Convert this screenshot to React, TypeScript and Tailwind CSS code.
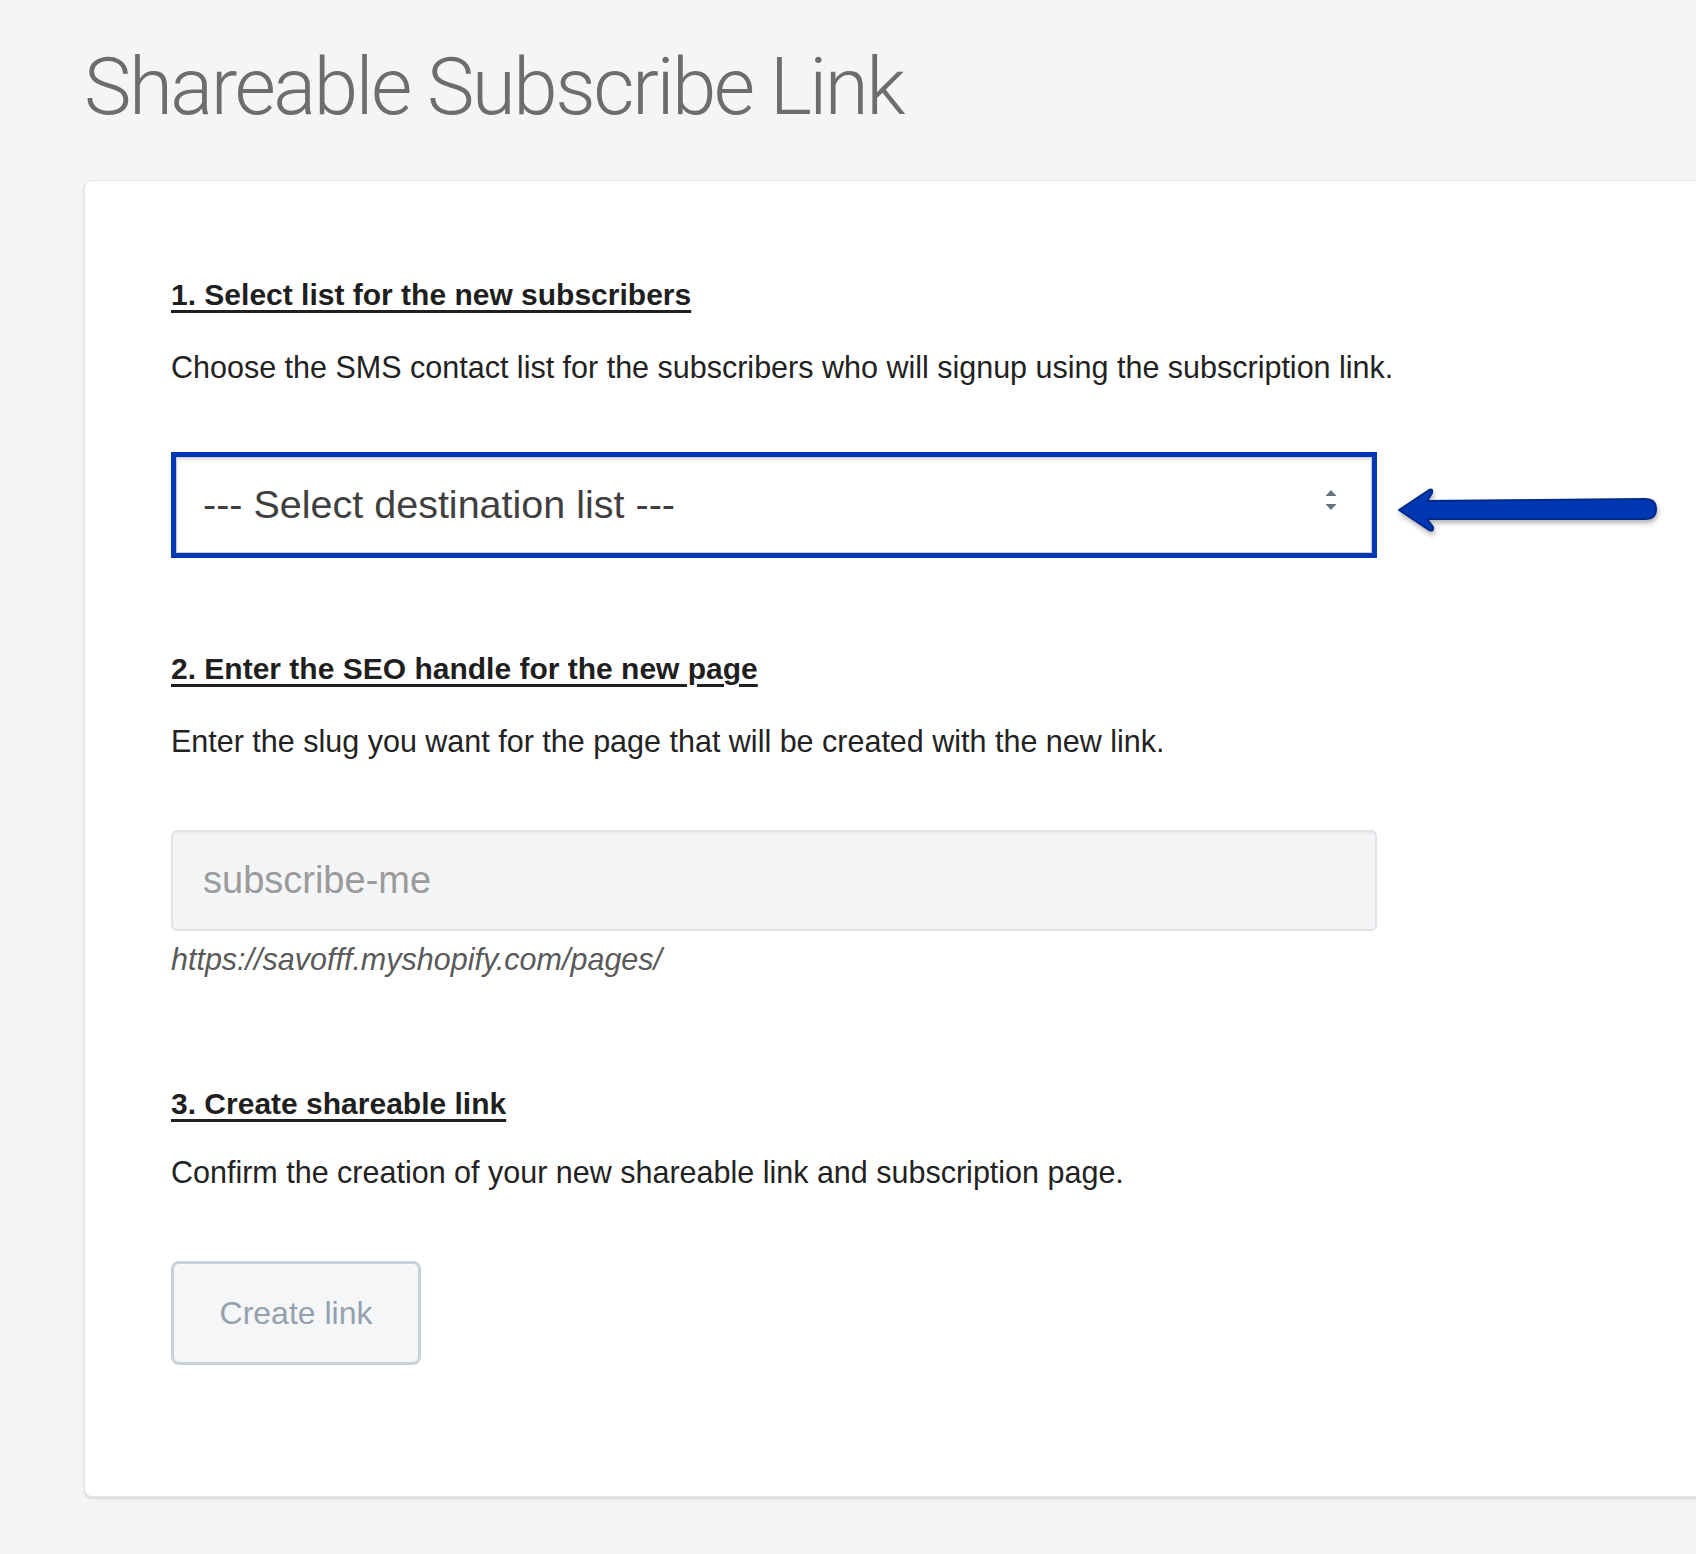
const sans = "font-['Liberation_Sans',Arial,sans-serif]";

const SectionHeading = ({children}: {children: string}) => (
    <h2 className="text-[30px] leading-[36px] font-bold text-[#1f1f1f] underline decoration-[3px] underline-offset-[5px]">
        {children}
    </h2>
);

const Arrow = () => (
    <svg width="270" height="60" viewBox="0 0 270 60" className="shrink-0 mt-[10px] ml-[-4px]">
        <defs>
            <filter id="arrowShadow" x="-10%" y="-30%" width="120%" height="180%">
                <feDropShadow dx="1" dy="3" stdDeviation="2.5" floodColor="#000" floodOpacity="0.3" />
            </filter>
        </defs>
        <path
            d="M4 30 L34 10 Q38 8 37 13 L32 21 L250 19 Q261 19 261 29 Q261 39 250 39 L32 39 L38 47 Q39 52 34 50 Z"
            fill="#0437b3"
            stroke="#022a8a"
            strokeWidth="2"
            strokeLinejoin="round"
            filter="url(#arrowShadow)"
        />
    </svg>
);

export default function App() {
    return (
        <div className={`min-h-screen bg-[#f4f5f7] overflow-hidden ${sans}`}>
            {/* Title */}
            <div className="pl-[84px] pt-[47px]">
                <h1 className="font-['Roboto',sans-serif] font-light text-[80px] leading-[80px] text-[#6d6d6d] tracking-[-2.5px]">
                    Shareable Subscribe Link
                </h1>
            </div>

            {/* Card */}
            <div className="ml-[84px] mt-[53px] w-[1700px] bg-white rounded-l-lg border border-[#e6e6e6] shadow-[0_2px_3px_rgba(0,0,0,0.12)] pl-[86px] pt-[96px] pb-[131px]">
                {/* Step 1 */}
                <SectionHeading>1. Select list for the new subscribers</SectionHeading>
                <p className="mt-[36px] text-[30.5px] leading-[36px] text-[#222]">
                    Choose the SMS contact list for the subscribers who will signup using the subscription link.
                </p>

                <div className="mt-[67px] flex items-center gap-[22px]">
                    <div className="w-[1206px] h-[106px] border-[5px] border-[#0437b3] bg-white">
                        <div className="h-full border border-[#c9ccd1] shadow-[inset_0_2px_3px_rgba(0,0,0,0.12)] flex items-center justify-between pl-[26px] pr-[33px]">
                            <span className="text-[39.5px] text-[#3f3f3f]">--- Select destination list ---</span>
                            <svg width="14" height="22" viewBox="0 0 14 22" className="mt-[-10px]">
                                <path d="M7 1 L12.5 7 L1.5 7 Z" fill="#637381" />
                                <path d="M7 21 L12.5 15 L1.5 15 Z" fill="#637381" />
                            </svg>
                        </div>
                    </div>
                    <Arrow />
                </div>

                {/* Step 2 */}
                <div className="mt-[93px]">
                    <SectionHeading>2. Enter the SEO handle for the new page</SectionHeading>
                </div>
                <p className="mt-[36px] text-[30.5px] leading-[36px] text-[#222]">
                    Enter the slug you want for the page that will be created with the new link.
                </p>

                <div className="mt-[71px] w-[1206px] h-[101px] rounded-md border-2 border-[#dfe3e8] bg-[#f4f5f7] shadow-[inset_0_2px_2px_rgba(0,0,0,0.04)] flex items-center pl-[30px]">
                    <span className="text-[38px] text-[#9b9b9b]">subscribe-me</span>
                </div>
                <p className="mt-[10px] text-[30.5px] leading-[36px] italic text-[#5a5a5a]">
                    https://savofff.myshopify.com/pages/
                </p>

                {/* Step 3 */}
                <div className="mt-[109px]">
                    <SectionHeading>3. Create shareable link</SectionHeading>
                </div>
                <p className="mt-[32px] text-[30.5px] leading-[36px] text-[#222]">
                    Confirm the creation of your new shareable link and subscription page.
                </p>

                <button className="mt-[71px] w-[250px] h-[104px] rounded-lg border-[3px] border-[#c9d1d9] bg-[#f4f6f8] text-[32px] text-[#95a1ae]">
                    Create link
                </button>
            </div>
        </div>
    );
}
